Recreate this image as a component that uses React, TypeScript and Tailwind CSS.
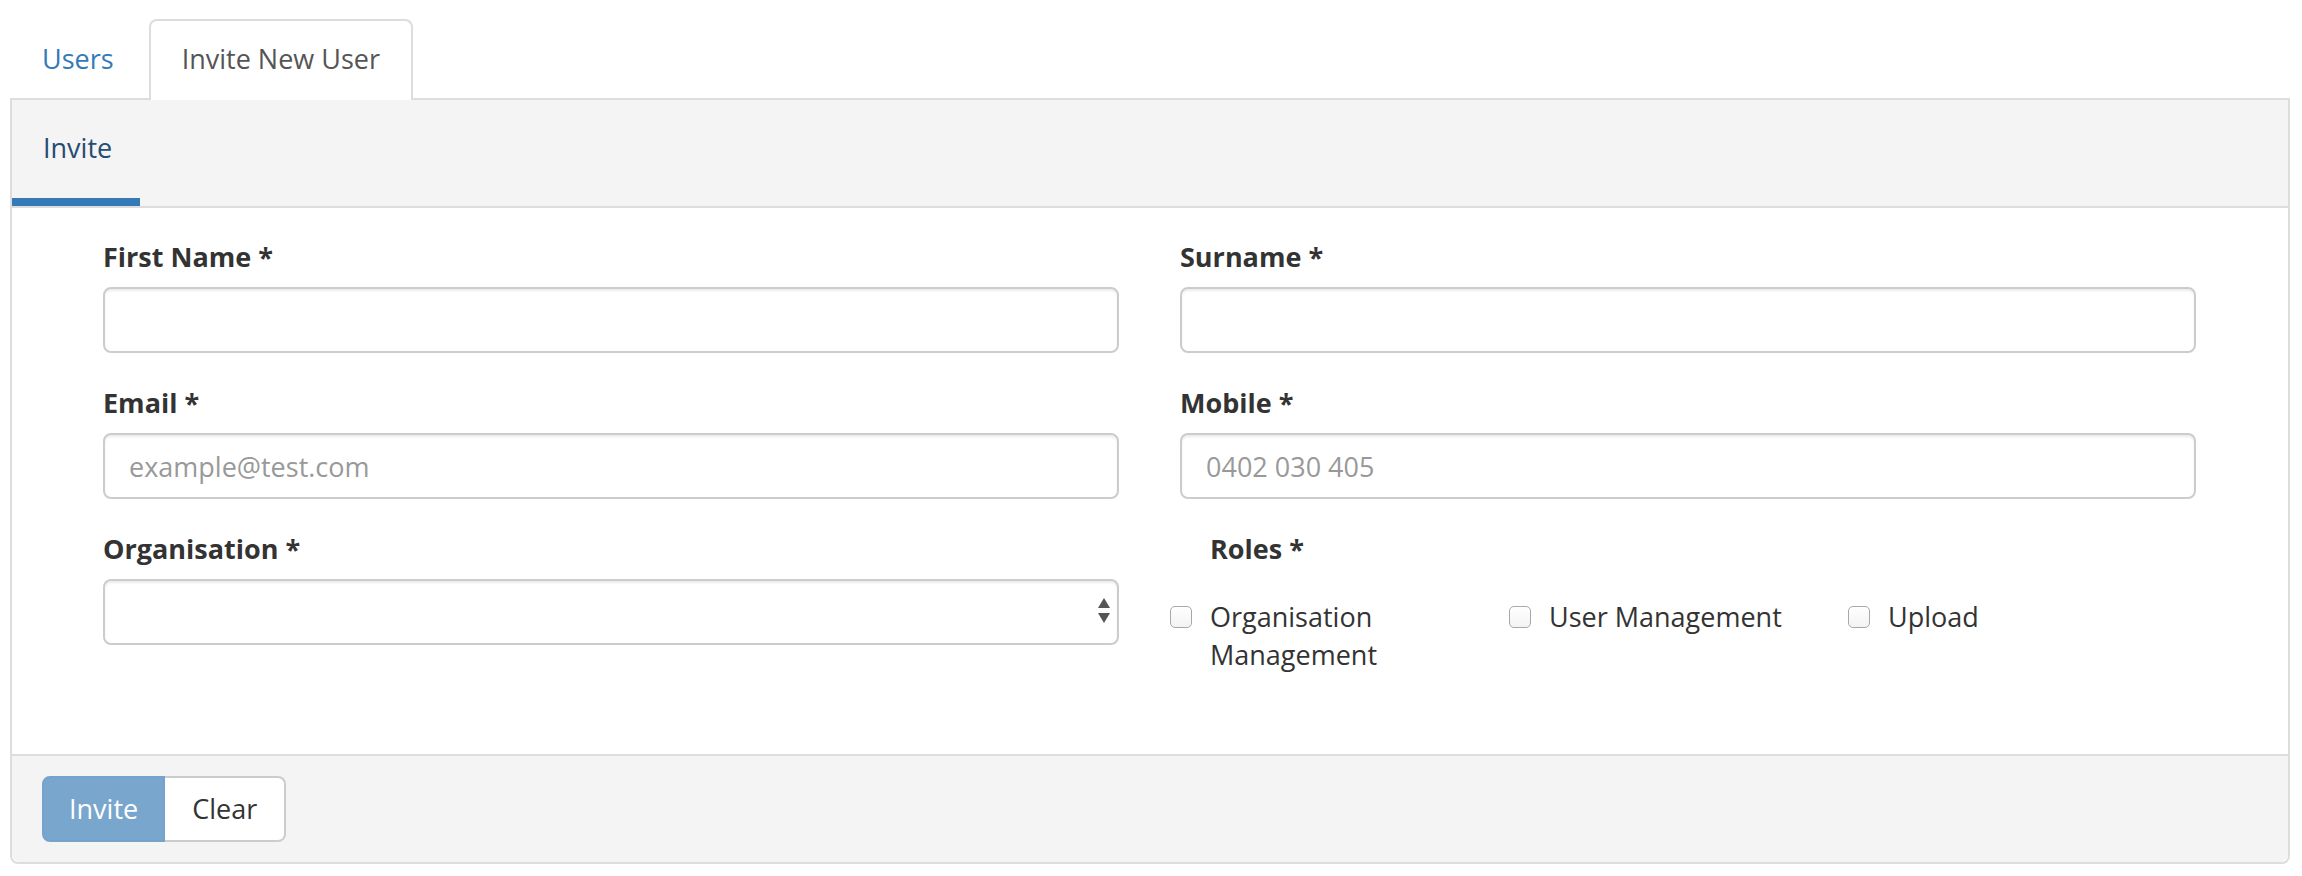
import { useState } from "react";

const font = { fontFamily: '"Open Sans", "Noto Sans", Arial, sans-serif' };

function Field({ label, placeholder }: { label: string; placeholder?: string }) {
  return (
    <div className="flex flex-col">
      <label className="text-[27px] leading-[40px] font-bold text-[#333] mb-[10px]">{label}</label>
      <input
        placeholder={placeholder}
        className="h-[66px] w-full rounded-[8px] border-2 border-[#ccc] bg-white px-[24px] text-[27px] text-[#555] placeholder:text-[#999] shadow-[inset_0_2px_2px_rgba(0,0,0,0.075)] outline-none"
      />
    </div>
  );
}

function Check({ label }: { label: string }) {
  const [on, setOn] = useState(false);
  return (
    <label className="flex items-start cursor-pointer" onClick={() => setOn(!on)}>
      <span className="mt-[8px] h-[22px] w-[22px] shrink-0 rounded-[5px] border-[1.5px] border-[#a8a8a8] bg-gradient-to-b from-white to-[#f3f3f3] flex items-center justify-center">
        {on && (
          <svg viewBox="0 0 16 16" className="h-[16px] w-[16px]">
            <path d="M3 8.5l3 3 7-7" fill="none" stroke="#333" strokeWidth="2" />
          </svg>
        )}
      </span>
      <span className="ml-[18px] text-[27px] leading-[38px] text-[#333] max-w-[280px]">{label}</span>
    </label>
  );
}

export default function App() {
  const [tab, setTab] = useState("invite");

  return (
    <div className="min-h-screen bg-white pt-[19px] pl-[10px] pr-[12px]" style={font}>
      {/* Tabs */}
      <div className="flex items-start h-[79px]">
        <button
          onClick={() => setTab("users")}
          className="mr-[3px] border-t-2 border-transparent px-[32px] pt-[18px] pb-[19px] text-[27px] leading-[40px] text-[#337ab7]"
        >
          Users
        </button>
        <button
          onClick={() => setTab("invite")}
          className="relative z-10 rounded-t-[8px] border-2 border-b-0 border-[#ddd] bg-white px-[31px] pt-[18px] pb-[21px] text-[27px] leading-[40px] text-[#555]"
        >
          Invite New User
        </button>
      </div>

      {/* Panel */}
      <div className="rounded-b-[8px] border-2 border-[#ddd]">
        {/* Header */}
        <div className="flex border-b-2 border-[#ddd] bg-[#f4f4f4]">
          <div className="border-b-[8px] border-[#337ab7] pl-[31px] pr-[28px] pt-[28px] pb-[30px] text-[27px] leading-[40px] text-[#264c73]">
            Invite
          </div>
        </div>

        {/* Body */}
        <div className="bg-white pl-[91px] pr-[92px] pt-[29px] pb-[80px]">
          <div className="grid grid-cols-2 gap-x-[61px] gap-y-[30px]">
            <Field label="First Name *" />
            <Field label="Surname *" />
            <Field label="Email *" placeholder="example@test.com" />
            <Field label="Mobile *" placeholder="0402 030 405" />
            <div className="flex flex-col self-start">
              <label className="text-[27px] leading-[40px] font-bold text-[#333] mb-[10px]">Organisation *</label>
              <div className="relative">
                <select className="h-[66px] w-full appearance-none rounded-[8px] border-2 border-[#ccc] bg-white px-[24px] text-[27px] text-[#555] shadow-[inset_0_2px_2px_rgba(0,0,0,0.075)] outline-none">
                  <option value=""></option>
                </select>
                <svg viewBox="0 0 12 26" className="pointer-events-none absolute right-[9px] top-[19px] h-[26px] w-[12px]">
                  <path d="M6 0L12 10H0Z" fill="#555" />
                  <path d="M0 15H12L6 25Z" fill="#555" />
                </svg>
              </div>
            </div>
            <div className="flex flex-col">
              <label className="pl-[30px] text-[27px] leading-[40px] font-bold text-[#333]">Roles *</label>
              <div className="-ml-[10px] mt-[29px] grid grid-cols-[339px_339px_339px]">
                <Check label="Organisation Management" />
                <Check label="User Management" />
                <Check label="Upload" />
              </div>
            </div>
          </div>
        </div>

        {/* Footer */}
        <div className="flex rounded-b-[8px] border-t-2 border-[#ddd] bg-[#f4f4f4] pl-[30px] pt-[20px] pb-[20px]">
          <button className="h-[66px] rounded-l-[8px] border-2 border-[#76a3cb] bg-[#79a6cd] px-[25px] text-[27px] text-white">
            Invite
          </button>
          <button className="h-[66px] rounded-r-[8px] border-2 border-l-0 border-[#ccc] bg-white px-[27px] text-[27px] text-[#333]">
            Clear
          </button>
        </div>
      </div>
    </div>
  );
}
